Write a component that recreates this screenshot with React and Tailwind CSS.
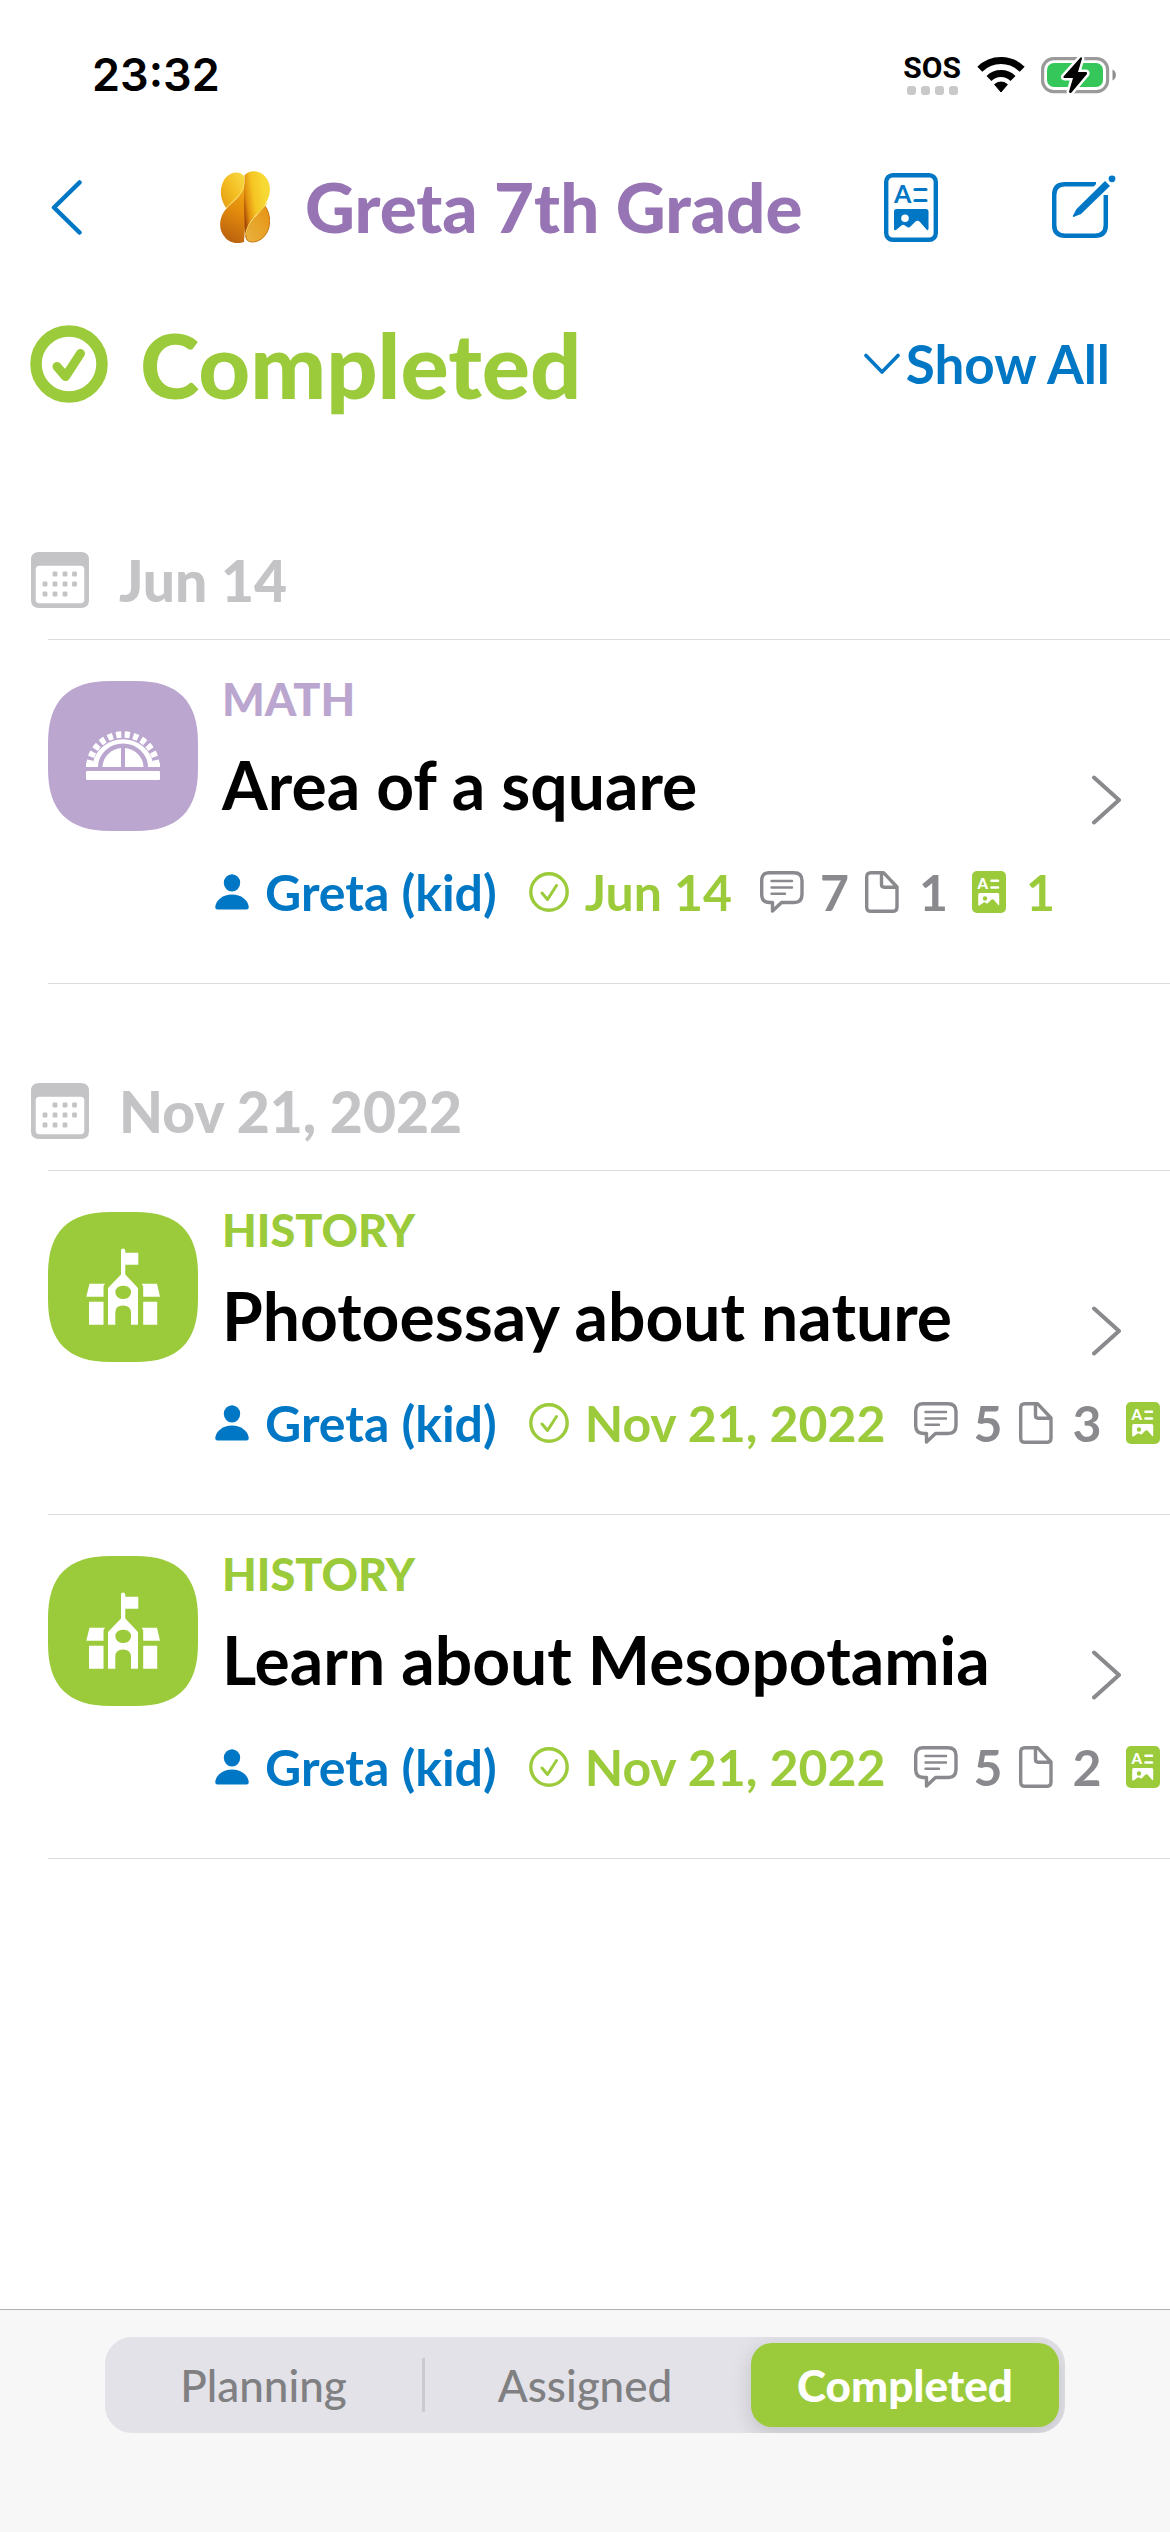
import { useState } from "react"
import clsx from "clsx"

const groups = [
  {
    date: "Jun 14",
    tasks: [
      { id: 1, subject: "MATH", title: "Area of a square", student: "Greta (kid)", done: "Jun 14", comments: 7, files: 1, cards: 1 },
    ],
  },
  {
    date: "Nov 21, 2022",
    tasks: [
      { id: 2, subject: "HISTORY", title: "Photoessay about nature", student: "Greta (kid)", done: "Nov 21, 2022", comments: 5, files: 3 },
      { id: 3, subject: "HISTORY", title: "Learn about Mesopotamia", student: "Greta (kid)", done: "Nov 21, 2022", comments: 5, files: 2 },
    ],
  },
]

const tabs = ["Planning", "Assigned", "Completed"]

const tilePath = "M0 62C0 20 20 0 62 0H88C130 0 150 20 150 62V88C150 130 130 150 88 150H62C20 150 0 130 0 88Z"

function WifiIcon() {
  return (
    <svg width="48" height="36" viewBox="0 0 48 36" fill="none" stroke="#000" strokeWidth="7">
      <path d="M2.8 12.3A30 30 0 0 1 45.2 12.3M12 21.5A17 17 0 0 1 36 21.5" />
      <path d="M17.6 27.5A9.5 9.5 0 0 1 30.4 27.5L24 35Z" fill="#000" stroke="#000" strokeWidth="1" strokeLinejoin="round" />
    </svg>
  )
}

function BatteryIcon() {
  return (
    <svg width="75" height="40" viewBox="0 -2 75 40">
      <rect x="1.6" y="1.6" width="65" height="33" rx="11" fill="none" stroke="#9a9a9a" strokeWidth="3.2" />
      <rect x="6" y="6" width="56" height="24" rx="7" fill="#35c759" />
      <path d="M71.5 12.5C76 14.5 76 21.5 71.5 23.5Z" fill="#8e8e8e" />
      <path
        d="M39.5 .5L22.5 19.5Q22 21 23.5 21H32L28 34.5Q28.5 37 30.5 35.5L46 17Q46.5 15 45 15H37L41 1.5Q41 -.5 39.5 .5Z"
        fill="#000"
        stroke="#fff"
        strokeWidth="5"
        paintOrder="stroke"
      />
    </svg>
  )
}

function TwistIcon() {
  return (
    <svg width="50" height="72" viewBox="0 0 50 72">
      <defs>
        <linearGradient id="twist-tl" x1="1" y1="0" x2="0" y2="1">
          <stop offset="0" stopColor="#f9dc45" />
          <stop offset=".5" stopColor="#f3bd22" />
          <stop offset="1" stopColor="#e39a12" />
        </linearGradient>
        <linearGradient id="twist-bl" x1=".6" y1="0" x2=".4" y2="1">
          <stop offset="0" stopColor="#f2ae16" />
          <stop offset=".5" stopColor="#e28a0c" />
          <stop offset="1" stopColor="#b9600f" />
        </linearGradient>
        <linearGradient id="twist-tr" x1="0" y1=".6" x2=".8" y2=".3">
          <stop offset="0" stopColor="#a84a08" />
          <stop offset=".2" stopColor="#e3920f" />
          <stop offset=".5" stopColor="#f5c422" />
          <stop offset="1" stopColor="#f7d935" />
        </linearGradient>
        <linearGradient id="twist-br" x1="1" y1="0" x2="0" y2="1">
          <stop offset="0" stopColor="#e79212" />
          <stop offset="1" stopColor="#e8b33f" />
        </linearGradient>
      </defs>
      <path d="M24 5C19 -1 9 1 4 9C-1 18 0 28 6 37C12 30 24 25 24 12Z" fill="url(#twist-tl)" />
      <path d="M45 35C51 43 51 56 46 63C41 71 31 73 27 69C23 62 30 52 36 45Z" fill="url(#twist-br)" stroke="#c9780f" strokeWidth="1" />
      <path d="M25 6C26 24 14 29 7 37C-1 45 -2 58 4 65C9 73 19 73 24 71L26 40Z" fill="url(#twist-bl)" />
      <path d="M24.5 4C30 -2 42 -1 47 8C53 18 49 29 42 38C34 46 26 52 25 68L24 34Z" fill="url(#twist-tr)" />
      <path d="M24 6C25 24 14 28 6 37M47 32C41 42 27 50 25.5 64" fill="none" stroke="#f9d94a" strokeWidth="1" />
    </svg>
  )
}

function BackIcon() {
  return (
    <svg width="31" height="55" viewBox="0 0 31 55" fill="none" stroke="currentColor" strokeWidth="4.5" strokeLinecap="round" strokeLinejoin="round">
      <path d="M28.5 2.5L3 27.5L28.5 52.5" />
    </svg>
  )
}

function PortfolioIcon() {
  return (
    <svg width="54" height="69" viewBox="0 0 54 69" fill="none" stroke="currentColor">
      <rect x="2.2" y="2.2" width="49.6" height="64.6" rx="6.5" strokeWidth="4.4" />
      <text x="10" y="30" fontSize="25" fill="currentColor" stroke="none" className="font-['Lato'] font-bold">A</text>
      <path d="M31 16.5H42M31 27.5H42" strokeWidth="3.2" strokeLinecap="round" />
      <path
        d="M10 56V38.5Q10 36 12.5 36H42Q44.5 36 44.5 38.5V56Q44 58 42.5 56.5L36 49Q33.5 46.5 31 49L26 54Q24 55 22.5 53.5Q19 50.5 17.5 52.5L12 57Q10 58 10 56ZM21 41.4A3.8 3.8 0 1 0 21 49A3.8 3.8 0 1 0 21 41.4Z"
        fill="currentColor"
        fillRule="evenodd"
        stroke="none"
      />
    </svg>
  )
}

function ComposeIcon() {
  return (
    <svg width="64" height="64" viewBox="0 0 64 64" fill="none" stroke="currentColor" strokeWidth="4.5">
      <path d="M44 9.2H13Q2.2 9.2 2.2 20V50Q2.2 60.8 13 60.8H43Q53.8 60.8 53.8 50V20" />
      <path d="M42.5 14L49 7" stroke="#fff" />
      <path d="M53 6L58 11L29 39L21.5 42Q20.5 42 21 40.5L24.5 34Z" fill="currentColor" stroke="none" />
      <circle cx="60" cy="3.8" r="3.4" fill="currentColor" stroke="none" />
    </svg>
  )
}

function CheckCircleIcon({ bold }) {
  if (bold) {
    return (
      <svg width="78" height="78" viewBox="0 0 78 78" fill="none" stroke="currentColor" strokeLinecap="round" strokeLinejoin="round">
        <circle cx="39" cy="39" r="33" strokeWidth="11.5" />
        <path d="M27 41.5L35.5 51.5L50.5 28.5" strokeWidth="9" />
      </svg>
    )
  }
  return (
    <svg width="40" height="40" viewBox="0 0 40 40" fill="none" stroke="currentColor" strokeLinecap="round" strokeLinejoin="round" className="shrink-0">
      <circle cx="20" cy="20" r="18.2" strokeWidth="3.4" />
      <path d="M13 21L18.5 27.5L27.5 13.5" strokeWidth="3" />
    </svg>
  )
}

function CalendarIcon() {
  const dots = [[24, 22], [34, 22], [43.5, 22], [14, 32], [24, 32], [34, 32], [43.5, 32], [14, 42], [24, 42], [34, 42]]
  return (
    <svg width="58" height="56" viewBox="0 0 58 56" fill="currentColor">
      <path d="M8 0H50Q58 0 58 8V48Q58 56 50 56H8Q0 56 0 48V8Q0 0 8 0ZM8.5 13.7Q4.7 13.7 4.7 17.5V47.5Q4.7 51.3 8.5 51.3H49.5Q53.3 51.3 53.3 47.5V17.5Q53.3 13.7 49.5 13.7Z" fillRule="evenodd" />
      {dots.map(([x, y]) => (
        <rect key={`${x}-${y}`} x={x - 2.4} y={y - 2.4} width="4.8" height="4.8" rx="1.2" />
      ))}
    </svg>
  )
}

function MathIcon() {
  return (
    <svg width="150" height="150" viewBox="0 0 150 150" fill="#fff">
      <path d={tilePath} fill="#bba6d0" />
      <rect x="38" y="90" width="74" height="9" rx="1.2" />
      {/* protractor teeth */}
      <path d="M41.5 86A33.5 32.5 0 0 1 108.5 86" fill="none" stroke="#fff" strokeWidth="6.5" pathLength="120" strokeDasharray="6 4" strokeDashoffset="-2" />
      <path d="M38 86V82H45A30.5 29 0 0 1 105 82H112V86H100A25 23.5 0 0 0 50 86Z" />
      <path d="M54.5 86A20.5 19.5 0 0 1 73 67V86ZM77 86V67A20.5 19.5 0 0 1 95.5 86Z" />
    </svg>
  )
}

function SchoolIcon() {
  return (
    <svg width="150" height="150" viewBox="0 0 150 150" fill="#fff">
      <path d={tilePath} fill="#9bcb3b" />
      <path d="M73 38.5Q73 36.5 75 36.5T77.3 38.5V40.7H90.3V52.7H77.3V62.5L90 76V112.7H83V101Q83 93.5 75 93.5T67.3 101V112.7H60V76L73 62.5ZM75.2 73.7A7 6.7 0 1 0 75.2 87A7 6.7 0 1 0 75.2 73.7Z" fillRule="evenodd" />
      <path d="M41.5 71.7H57L55.5 74V84.7H38.3ZM109 71.7H93.5L95.2 74V84.7H112Z" />
      <path d="M41 89.7H55.5V112.7H41ZM95.2 89.7H109.2V112.7H95.2Z" />
    </svg>
  )
}

function PersonIcon() {
  return (
    <svg width="34" height="36" viewBox="0 0 34 36" fill="currentColor" className="shrink-0">
      <ellipse cx="17" cy="8.8" rx="8.2" ry="8.6" />
      <path d="M2.5 35.5Q.2 35.5 .2 33C1 26 8 20.5 17 20.5S33 26 33.8 33Q33.8 35.5 31.5 35.5Z" />
    </svg>
  )
}

function CommentIcon() {
  return (
    <svg width="44" height="42" viewBox="0 0 44 42" fill="none" stroke="currentColor" strokeWidth="3.4" strokeLinecap="round" strokeLinejoin="round" className="shrink-0">
      <path d="M9.5 1.7H34Q42 1.7 42 9.5V23.5Q42 31.5 34 31.5H21.5L12.5 40V31.5H9.5Q1.7 31.5 1.7 23.5V9.5Q1.7 1.7 9.5 1.7Z" />
      <path d="M11.5 10H32M11.5 16.5H32M11.5 22.7H25" strokeWidth="2.4" />
    </svg>
  )
}

function FileIcon() {
  return (
    <svg width="34" height="42" viewBox="0 0 34 42" fill="none" stroke="currentColor" strokeWidth="3.4" strokeLinejoin="round" className="shrink-0">
      <path d="M6 1.7H18.5L32 16V36Q32 40.3 27.5 40.3H6Q1.7 40.3 1.7 36V6Q1.7 1.7 6 1.7ZM16.5 2V13.5Q16.5 16.2 19.2 16.2H32" />
    </svg>
  )
}

function CardIcon() {
  return (
    <svg width="34" height="42" viewBox="0 0 34 42" className="shrink-0">
      <rect width="34" height="42" rx="5" fill="#9bcb3b" />
      <text x="5.5" y="18" fontSize="15" fill="#fff" className="font-['Lato'] font-black">A</text>
      <path d="M19.5 9.7H26M19.5 16.5H26" stroke="#fff" strokeWidth="2.6" strokeLinecap="round" />
      <path
        d="M6.2 33.5V23.5Q6.2 22 7.8 22H25.7Q27.2 22 27.2 23.5V33.5Q27 35 26 33.8L22 29Q20.5 27.5 19 29L16 32Q15 33 14 32Q12.5 30.5 11.3 31.8L7.5 34.5Q6.2 35 6.2 33.5ZM13 25.3A2.2 2.2 0 1 0 13 29.7A2.2 2.2 0 1 0 13 25.3Z"
        fill="#fff"
        fillRule="evenodd"
      />
    </svg>
  )
}

function TaskRow({ task }) {
  const isMath = task.subject === "MATH"

  return (
    <li className="border-b border-[#dcdcde]">
      <a href="#" className="block overflow-hidden pt-[31px] pb-[67px]">
        <div className="flex h-40">
          <div className="mt-2.5 shrink-0">{isMath ? <MathIcon /> : <SchoolIcon />}</div>
          <div className="ml-6 grow">
            <p className={clsx("text-[45px] leading-[56px] font-black", isMath ? "text-[#bba6d0]" : "text-[#9bcb3b]")}>
              {task.subject}
            </p>
            <h3 className="mt-[18px] text-[66px] leading-[80px] font-bold text-black">{task.title}</h3>
          </div>
          <svg width="31" height="50" viewBox="0 0 31 50" fill="none" stroke="#8a898e" strokeWidth="4" strokeLinecap="round" strokeLinejoin="round" className="mr-12 mb-1.5 self-end">
            <path d="M3 2.5L28 25L3 47.5" />
          </svg>
        </div>

        <div className="mt-[37px] flex items-center pl-[167px] text-[50px] leading-[48px] font-bold whitespace-nowrap text-[#8a898e]">
          <span className="flex items-center gap-4 text-[#0077c5]">
            <PersonIcon />
            {task.student}
          </span>
          <span className="ml-8 flex items-center gap-4 text-[#9bcb3b]">
            <CheckCircleIcon />
            {task.done}
          </span>
          <span className="ml-7 flex items-center gap-4">
            <CommentIcon />
            {task.comments}
          </span>
          <span className="ml-4 flex items-center gap-5">
            <FileIcon />
            {task.files}
          </span>
          <span className="ml-6 flex items-center gap-5 text-[#9bcb3b]">
            <CardIcon />
            {task.cards}
          </span>
        </div>
      </a>
    </li>
  )
}

export default function App() {
  const [activeTab, setActiveTab] = useState("Completed")

  return (
    <div className="flex min-h-screen flex-col overflow-hidden bg-white font-['Lato',sans-serif]">
      <div className="flex h-[149px] items-center justify-between pr-[54px] pl-[92px]">
        <span className="font-['Inter'] text-[45px] font-semibold text-black">23:32</span>
        <div className="flex items-center gap-4">
          <div className="flex flex-col items-center gap-1">
            <span className="font-['Roboto'] text-[30px] leading-[28px] font-bold text-black">SOS</span>
            <div className="flex gap-[5px]">
              {[0, 1, 2, 3].map((dot) => (
                <span key={dot} className="size-[9px] rounded-[3px] bg-[#c9c9c9]" />
              ))}
            </div>
          </div>
          <WifiIcon />
          <BatteryIcon />
        </div>
      </div>

      <header className="flex h-[116px] items-center pr-[54px] pl-[51px] text-[#0077c5]">
        <button aria-label="Back">
          <BackIcon />
        </button>
        <div className="ml-[138px] flex items-center gap-[35px]">
          <TwistIcon />
          <h1 className="text-[69px] leading-[80px] font-black whitespace-nowrap text-[#9775b4]">Greta 7th Grade</h1>
        </div>
        <div className="ml-auto flex items-center gap-[114px]">
          <button aria-label="Portfolio">
            <PortfolioIcon />
          </button>
          <button aria-label="New assignment">
            <ComposeIcon />
          </button>
        </div>
      </header>

      <main className="grow">
        <div className="flex items-center justify-between pt-[60px] pr-[60px] pb-[50px] pl-[30px]">
          <div className="flex h-[78px] items-center gap-8 text-[#9bcb3b]">
            <CheckCircleIcon bold />
            <h2 className="text-[90px] leading-[78px] font-black">Completed</h2>
          </div>
          <button className="flex items-center gap-1.5 text-[53px] leading-[60px] font-bold text-[#0077c5]">
            <svg width="36" height="22" viewBox="0 0 36 22" fill="none" stroke="currentColor" strokeWidth="3.6" strokeLinecap="round" strokeLinejoin="round">
              <path d="M2 2.5L18 19L34 2.5" />
            </svg>
            Show All
          </button>
        </div>

        {groups.map((group) => (
          <section key={group.date}>
            <div className="flex items-center gap-[30px] pt-[99px] pb-[31px] pl-[31px] text-[#c4c4c7]">
              <CalendarIcon />
              <h2 className="text-[57px] leading-[56px] font-black">{group.date}</h2>
            </div>
            <ul className="ml-12 border-t border-[#dcdcde]">
              {group.tasks.map((task) => (
                <TaskRow key={task.id} task={task} />
              ))}
            </ul>
          </section>
        ))}
      </main>

      <footer className="border-t border-[#b2b2b4] bg-[#f7f7f7] px-[105px] pt-[27px] pb-[99px]">
        <div role="tablist" className="grid h-24 grid-cols-3 items-center overflow-hidden rounded-[27px] bg-[#e3e2e8]">
          {tabs.map((tab) => (
            <button
              key={tab}
              role="tab"
              aria-selected={activeTab === tab}
              onClick={() => setActiveTab(tab)}
              className={clsx(
                "text-[44px] leading-[54px]",
                activeTab === tab
                  ? "mx-1.5 h-[84px] rounded-[21px] bg-[#9bcb3b] font-black text-white shadow-[0_6px_20px_rgba(0,0,0,0.15)]"
                  : "h-[54px] font-medium text-[#808082]",
                tab === "Planning" && activeTab !== tab && "border-r-[3px] border-[#cbcad0]"
              )}
            >
              {tab}
            </button>
          ))}
        </div>
      </footer>
    </div>
  )
}
